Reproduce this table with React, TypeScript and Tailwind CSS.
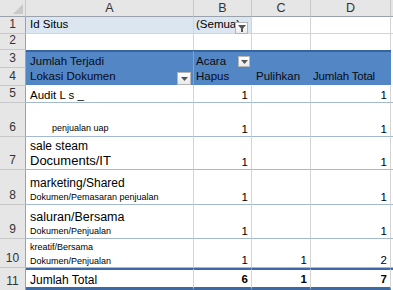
import React from "react";

const HB = "bg-[#e6e6e6]";

function RowHead({ n, cls = "" }: { n: string; cls?: string }) {
  return (
    <div
      className={`${HB} border-r border-b border-r-[#9aa3ad] border-b-[#c8c8c8] flex items-end justify-center text-[12px] leading-none text-[#333] pb-[3px] ${cls}`}
    >
      {n}
    </div>
  );
}

function ColHead({ l }: { l: string }) {
  return (
    <div className={`${HB} border-r border-b border-r-[#c8c8c8] border-b-[#9aa3ad] flex items-center justify-center text-[12.5px] leading-none text-[#333]`}>
      {l}
    </div>
  );
}

function DropBtn({ cls }: { cls: string }) {
  return (
    <div className={`absolute ${cls} bg-gradient-to-b from-white to-[#e9e9e9] border border-[#b5b5b5] flex items-center justify-center`}>
      <svg width="7" height="4" viewBox="0 0 7 4">
        <path d="M0 0 H7 L3.5 4 Z" fill="#555" />
      </svg>
    </div>
  );
}

type Line = { t: string; c: string };
type Row = { n: string; h: Line[]; b: string; cc: string; d: string; pb: string };

const rows: Row[] = [
  { n: "5", h: [{ t: "Audit L s _", c: "text-[11.5px] leading-[13px]" }], b: "1", cc: "", d: "1", pb: "pb-0" },
  { n: "6", h: [{ t: "penjualan uap", c: "text-[9px] leading-[11px] pl-[22px]" }], b: "1", cc: "", d: "1", pb: "pb-[2px]" },
  {
    n: "7",
    h: [
      { t: "sale steam", c: "text-[12px] leading-[14px]" },
      { t: "Documents/IT", c: "text-[13px] leading-[16px]" },
    ],
    b: "1",
    cc: "",
    d: "1",
    pb: "pb-0",
  },
  {
    n: "8",
    h: [
      { t: "marketing/Shared", c: "text-[12px] leading-[16px]" },
      { t: "Dokumen/Pemasaran penjualan", c: "text-[9px] leading-[13px]" },
    ],
    b: "1",
    cc: "",
    d: "1",
    pb: "pb-0",
  },
  {
    n: "9",
    h: [
      { t: "saluran/Bersama", c: "text-[12.5px] leading-[16px]" },
      { t: "Dokumen/Penjualan", c: "text-[9px] leading-[13px]" },
    ],
    b: "1",
    cc: "",
    d: "1",
    pb: "pb-0",
  },
  {
    n: "10",
    h: [
      { t: "kreatif/Bersama", c: "text-[9px] leading-[16px]" },
      { t: "Dokumen/Penjualan", c: "text-[9px] leading-[12px]" },
    ],
    b: "1",
    cc: "1",
    d: "2",
    pb: "pb-0",
  },
];

export default function App() {
  const cellV = "border-r border-r-[#d4d4d4]";
  const rowLine = "border-b border-b-[#a3b8d1]";
  const blue = "bg-[#5286c4] border-t-2 border-t-[#3564a0]";
  return (
    <div className="w-[393px] h-[290px] bg-white overflow-hidden font-['Liberation_Sans',Arial,sans-serif] text-black">
      <div className="grid w-[393px] h-[290px] grid-cols-[26px_168px_58px_59px_80px_2px] grid-rows-[17px_17px_16px_18px_18px_17px_34px_33px_35px_34px_29px_22px]">
        {/* header row */}
        <div className={`${HB} border-r border-b border-r-[#c8c8c8] border-b-[#9aa3ad] relative`}>
          <svg className="absolute right-[2px] bottom-[2px]" width="10" height="10" viewBox="0 0 10 10">
            <path d="M10 0 V10 H0 Z" fill="#c9c9c9" />
          </svg>
        </div>
        <ColHead l="A" />
        <ColHead l="B" />
        <ColHead l="C" />
        <ColHead l="D" />
        <div className={`${HB} border-b border-b-[#9aa3ad]`} />

        {/* row 1 */}
        <RowHead n="1" />
        <div className={`bg-[#dce6f1] ${cellV} border-b border-b-[#d4d4d4] flex items-end pl-[4px] pb-[2px] text-[11.5px] leading-[13px]`}>Id Situs</div>
        <div className={`bg-[#dce6f1] ${cellV} border-b border-b-[#d4d4d4] flex items-end pl-[2px] pb-[2px] text-[11.5px] leading-[13px] relative`}>
          (Semua)
          <div className="absolute right-[3px] top-[5px] w-[13px] h-[12px] bg-gradient-to-b from-white to-[#ececec] border border-[#b5b5b5] flex items-center justify-center">
            <svg width="8" height="7" viewBox="0 0 8 7">
              <path d="M0 0 H8 L5 3.5 V7 H3 V3.5 Z" fill="#555" />
            </svg>
          </div>
        </div>
        <div className={`${cellV} border-b border-b-[#d4d4d4]`} />
        <div className={`${cellV} border-b border-b-[#d4d4d4]`} />
        <div className="border-b border-b-[#d4d4d4]" />

        {/* row 2 */}
        <RowHead n="2" />
        <div className={`${cellV}`} />
        <div className={`${cellV}`} />
        <div className={`${cellV}`} />
        <div className={`${cellV}`} />
        <div />

        {/* row 3 */}
        <RowHead n="3" />
        <div className={`${blue} border-r border-r-[#7ea3d2] flex items-end pl-[4px] text-[11.5px] leading-[13px] text-[#0b0b14]`}>Jumlah Terjadi</div>
        <div className={`${blue} flex items-end pl-[2px] text-[11.5px] leading-[13px] text-[#0b0b14] relative`}>
          Acara
          <DropBtn cls="right-[2px] top-[4px] w-[12px] h-[11px]" />
        </div>
        <div className={`${blue}`} />
        <div className={`${blue}`} />
        <div className="bg-white" />

        {/* row 4 */}
        <RowHead n="4" />
        <div className="bg-[#5286c4] border-r border-r-[#7ea3d2] border-b border-b-white flex items-end pl-[4px] pb-[2px] text-[11.5px] leading-[13px] text-[#0b0b14] relative">
          Lokasi Dokumen
          <DropBtn cls="right-[2px] top-[4px] w-[14px] h-[13px]" />
        </div>
        <div className="bg-[#5286c4] border-b border-b-white flex items-end pl-[2px] pb-[2px] text-[11.5px] leading-[13px] text-[#0b0b14]">Hapus</div>
        <div className="bg-[#5286c4] border-b border-b-white flex items-end pl-[4px] pb-[2px] text-[11.5px] leading-[13px] text-[#0b0b14]">Pulihkan</div>
        <div className="bg-[#5286c4] border-b border-b-white flex items-end pl-[2px] pb-[2px] text-[11.5px] leading-[13px] text-[#0b0b14] tracking-[-0.2px]">Jumlah Total</div>
        <div className="bg-white border-b border-b-white" />

        {rows.map((r) => (
          <React.Fragment key={r.n}>
            <RowHead n={r.n} />
            <div className={`${cellV} ${rowLine} flex flex-col justify-end pl-[4px] ${r.pb} whitespace-nowrap overflow-hidden`}>
              {r.h.map((l, i) => (
                <div key={i} className={l.c}>
                  {l.t}
                </div>
              ))}
            </div>
            <div className={`${cellV} ${rowLine} flex items-end justify-end pr-[3px] pb-0 text-[11.5px] leading-[13px]`}>{r.b}</div>
            <div className={`${cellV} ${rowLine} flex items-end justify-end pr-[3px] pb-0 text-[11.5px] leading-[13px]`}>{r.cc}</div>
            <div className={`${cellV} ${rowLine} flex items-end justify-end pr-[3px] pb-0 text-[11.5px] leading-[13px]`}>{r.d}</div>
            <div className={`${rowLine}`} />
          </React.Fragment>
        ))}

        {/* row 11 */}
        <RowHead n="11" cls="border-b-0" />
        <div className="border-t-2 border-t-[#3d6aa6] border-b-[3px] border-b-[#3d6aa6] border-r border-r-[#d4d4d4] flex items-end pl-[4px] pb-0 text-[12px] leading-[14px]">Jumlah Total</div>
        <div className="border-t-2 border-t-[#3d6aa6] border-b-[3px] border-b-[#3d6aa6] border-r border-r-[#d4d4d4] flex items-end justify-end pr-[3px] pb-[1px] text-[11.5px] leading-[13px] font-bold">6</div>
        <div className="border-t-2 border-t-[#3d6aa6] border-b-[3px] border-b-[#3d6aa6] border-r border-r-[#d4d4d4] flex items-end justify-end pr-[3px] pb-[1px] text-[11.5px] leading-[13px] font-bold">1</div>
        <div className="border-t-2 border-t-[#3d6aa6] border-b-[3px] border-b-[#3d6aa6] border-r border-r-[#d4d4d4] flex items-end justify-end pr-[3px] pb-[1px] text-[11.5px] leading-[13px] font-bold">7</div>
        <div className="border-t-2 border-t-[#3d6aa6]" />
      </div>
    </div>
  );
}
